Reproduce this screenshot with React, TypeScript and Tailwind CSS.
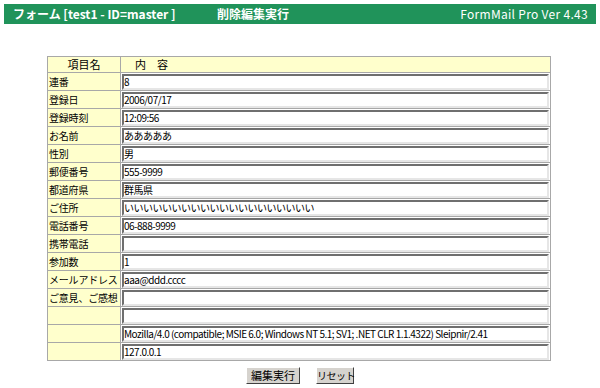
import { useState } from "react";

const rows: { label: string; value: string }[] = [
  { label: "連番", value: "8" },
  { label: "登録日", value: "2006/07/17" },
  { label: "登録時刻", value: "12:09:56" },
  { label: "お名前", value: "あああああ" },
  { label: "性別", value: "男" },
  { label: "郵便番号", value: "555-9999" },
  { label: "都道府県", value: "群馬県" },
  { label: "ご住所", value: "いいいいいいいいいいいいいいいいいいいい" },
  { label: "電話番号", value: "06-888-9999" },
  { label: "携帯電話", value: "" },
  { label: "参加数", value: "1" },
  { label: "メールアドレス", value: "aaa@ddd.cccc" },
  { label: "ご意見、ご感想", value: "" },
  { label: "", value: "" },
  {
    label: "",
    value:
      "Mozilla/4.0 (compatible; MSIE 6.0; Windows NT 5.1; SV1; .NET CLR 1.1.4322) Sleipnir/2.41",
  },
  { label: "", value: "127.0.0.1" },
];

const font = { fontFamily: '"Noto Sans CJK JP", "Liberation Sans", sans-serif' };

export default function App() {
  const [values, setValues] = useState(rows.map((r) => r.value));

  return (
    <div className="w-[600px] h-[388px] bg-white text-black" style={font}>
      <div className="pt-1 px-1">
        <div className="h-5 bg-[#20935a] flex items-center text-white text-[12px] font-bold pl-[9px] pr-[8px] leading-none">
          <span className="w-[204px]">フォーム [test1 - ID=master ]</span>
          <span>削除編集実行</span>
          <span className="ml-auto font-normal tracking-[0.3px]">FormMail Pro Ver 4.43</span>
        </div>
      </div>

      <div className="pl-[47px] pt-[32px]">
        <table className="w-[504px] table-fixed border-collapse border border-[#a8a8a8] text-[11px] leading-none">
          <colgroup>
            <col className="w-[73px]" />
            <col />
          </colgroup>
          <thead>
            <tr className="h-4 bg-[#ffffcc]">
              <th className="border border-[#a8a8a8] font-normal text-center">項目名</th>
              <th className="border border-[#a8a8a8] font-normal text-left pl-[14px]">内　容</th>
            </tr>
          </thead>
          <tbody>
            {rows.map((r, i) => (
              <tr key={i} className="h-[18px]">
                <td className="bg-[#ffffcc] border border-[#a8a8a8] pl-[1px] text-[10px] whitespace-nowrap overflow-hidden tracking-[-0.2px]">
                  {r.label}
                </td>
                <td className="border border-[#a8a8a8] p-0 px-px">
                  <input
                    className="block w-full h-4 px-0 text-[10px] tracking-[-0.5px] bg-white border-2 border-t-[#6f6f6f] border-l-[#6f6f6f] border-b-[#e6e6e6] border-r-[#e6e6e6] outline-none"
                    style={font}
                    value={values[i]}
                    onChange={(e) =>
                      setValues((prev) => prev.map((v, j) => (j === i ? e.target.value : v)))
                    }
                  />
                </td>
              </tr>
            ))}
          </tbody>
        </table>

        <div className="flex pl-[199px] gap-[16px] pt-[6px]">
          <button className="h-[17px] w-[54px] text-[11px] leading-none whitespace-nowrap bg-[#d6d3ce] border border-t-white border-l-white border-b-[#404040] border-r-[#404040]">
            編集実行
          </button>
          <button className="h-[17px] w-[38px] text-[10px] leading-none whitespace-nowrap tracking-[-0.5px] bg-[#d6d3ce] border border-t-white border-l-white border-b-[#404040] border-r-[#404040]">
            リセット
          </button>
        </div>
      </div>
    </div>
  );
}
